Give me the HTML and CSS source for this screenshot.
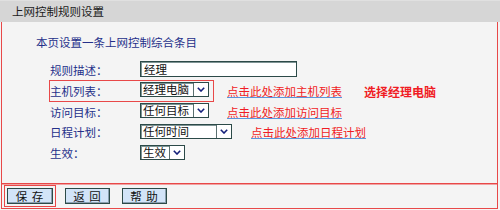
FILE: index.html
```html
<!DOCTYPE html>
<html lang="zh-CN">
<head>
<meta charset="utf-8">
<title>上网控制规则设置</title>
<link rel="stylesheet" href="styles.css">
</head>
<body>
<div class="titlebar">上网控制规则设置</div>
<div class="panel">
  <div class="content">
    <div class="subtitle">本页设置一条上网控制综合条目</div>
    <div class="form">
      <div class="row">
        <span class="label">规则描述：</span>
        <span class="txt">经理</span>
      </div>
      <div class="row">
        <span class="hl">
          <span class="label">主机列表：</span>
          <span class="sel w69"><span class="val">经理电脑</span><span class="arr"><svg width="8" height="5" viewBox="0 0 8 5"><path d="M0.8 0.8 L4 4 L7.2 0.8" fill="none" stroke="#14207a" stroke-width="1.6"/></svg></span></span>
        </span>
        <a class="link l1">点击此处添加主机列表</a>
        <span class="note">选择经理电脑</span>
      </div>
      <div class="row">
        <span class="label">访问目标：</span>
        <span class="sel w69"><span class="val">任何目标</span><span class="arr"><svg width="8" height="5" viewBox="0 0 8 5"><path d="M0.8 0.8 L4 4 L7.2 0.8" fill="none" stroke="#14207a" stroke-width="1.6"/></svg></span></span>
        <a class="link l2">点击此处添加访问目标</a>
      </div>
      <div class="row">
        <span class="label">日程计划：</span>
        <span class="sel w92"><span class="val">任何时间</span><span class="arr"><svg width="8" height="5" viewBox="0 0 8 5"><path d="M0.8 0.8 L4 4 L7.2 0.8" fill="none" stroke="#14207a" stroke-width="1.6"/></svg></span></span>
        <a class="link l3">点击此处添加日程计划</a>
      </div>
      <div class="row">
        <span class="label">生效：</span>
        <span class="sel w45"><span class="val">生效</span><span class="arr"><svg width="8" height="5" viewBox="0 0 8 5"><path d="M0.8 0.8 L4 4 L7.2 0.8" fill="none" stroke="#14207a" stroke-width="1.6"/></svg></span></span>
      </div>
    </div>
  </div>
  <div class="footer">
    <button class="btn b1 mark">保 存</button>
    <button class="btn">返 回</button>
    <button class="btn">帮 助</button>
  </div>
</div>
</body>
</html>
```
FILE: styles.css
```css
* { box-sizing: border-box; }
html, body {
  margin: 0;
  padding: 0;
  background: #f4f4f4;
  width: 500px;
  height: 210px;
  overflow: hidden;
  font-family: "Noto Sans CJK SC", "Noto Sans", sans-serif;
  font-size: 11.5px;
}
.titlebar {
  height: 22px;
  background: #d6d6d6;
  border-top: 1px solid #e0e0e0;
  padding-left: 12px;
  line-height: 21px;
  color: #1a1a1a;
}
.panel {
  margin-left: 1px;
  width: 497px;
  border-left: 1px solid #e84848;
  border-right: 1px solid #e84848;
  background: #f4f4f4;
}
.content {
  height: 162px;
  border-bottom: 1px solid #e84848;
  padding-top: 12px;
}
.subtitle {
  padding-left: 34px;
  line-height: 16px;
  height: 16px;
  color: #24308a;
}
.form {
  margin-top: 9.6px;
  padding-left: 48px;
}
.row {
  height: 20.8px;
  display: flex;
  align-items: center;
}
.label {
  width: 90px;
  color: #24308a;
  line-height: 16px;
}
.hl {
  display: flex;
  align-items: center;
  height: 20px;
  padding-right: 4px;
  outline: 1px solid #e84848;
}
.txt {
  width: 157px;
  height: 16px;
  margin-top: -2px;
  background: #fff;
  border: 1px solid #2c4a48;
  box-shadow: inset 1px 1px 0 #7e9494;
  padding-left: 3px;
  line-height: 14px;
  color: #111;
}
.sel {
  display: flex;
  height: 15px;
  margin-top: -2px;
  background: #fff;
  border: 1px solid #2c4a48;
  box-shadow: inset 1px 1px 0 #7e9494;
  color: #111;
}
.w69 { width: 69px; }
.w92 { width: 92px; }
.w45 { width: 45px; }
.val {
  flex: 1;
  padding-left: 2px;
  line-height: 13px;
  white-space: nowrap;
}
.arr {
  flex: none;
  width: 15px;
  border-left: 1px solid #5a7070;
  background: #fff;
  display: flex;
  align-items: center;
  justify-content: center;
}
.arr svg { display: block; }
.link {
  color: #f01c24;
  line-height: 16px;
  text-decoration: underline;
  text-decoration-color: #5a96dc;
  text-decoration-thickness: 1px;
  text-underline-offset: 1px;
}
.l1 { margin-left: 14px; }
.l2 { margin-left: 18px; }
.l3 { margin-left: 19px; }
.note {
  margin-left: 22px;
  color: #f01c24;
  font-weight: bold;
  font-size: 12px;
  line-height: 16px;
  margin-top: 2px;
}
.footer {
  height: 25px;
  border-top: 1px solid #f0a2a2;
  border-bottom: 1px solid #e84848;
  padding: 2.5px 0 0 5px;
  display: flex;
  align-items: flex-start;
  gap: 12px;
}
.btn {
  width: 45px;
  height: 16px;
  padding: 0;
  margin: 0;
  font: inherit;
  font-size: 11.5px;
  line-height: 14px;
  color: #111;
  background: #d2e4f8;
  border: 1px solid #2c4a48;
  box-shadow: inset -1px -1px 0 #8aa0b0;
  letter-spacing: 1px;
}
.b1 { width: 46px; }
.mark {
  outline: 1px solid #e84848;
  outline-offset: 2px;
}
```
